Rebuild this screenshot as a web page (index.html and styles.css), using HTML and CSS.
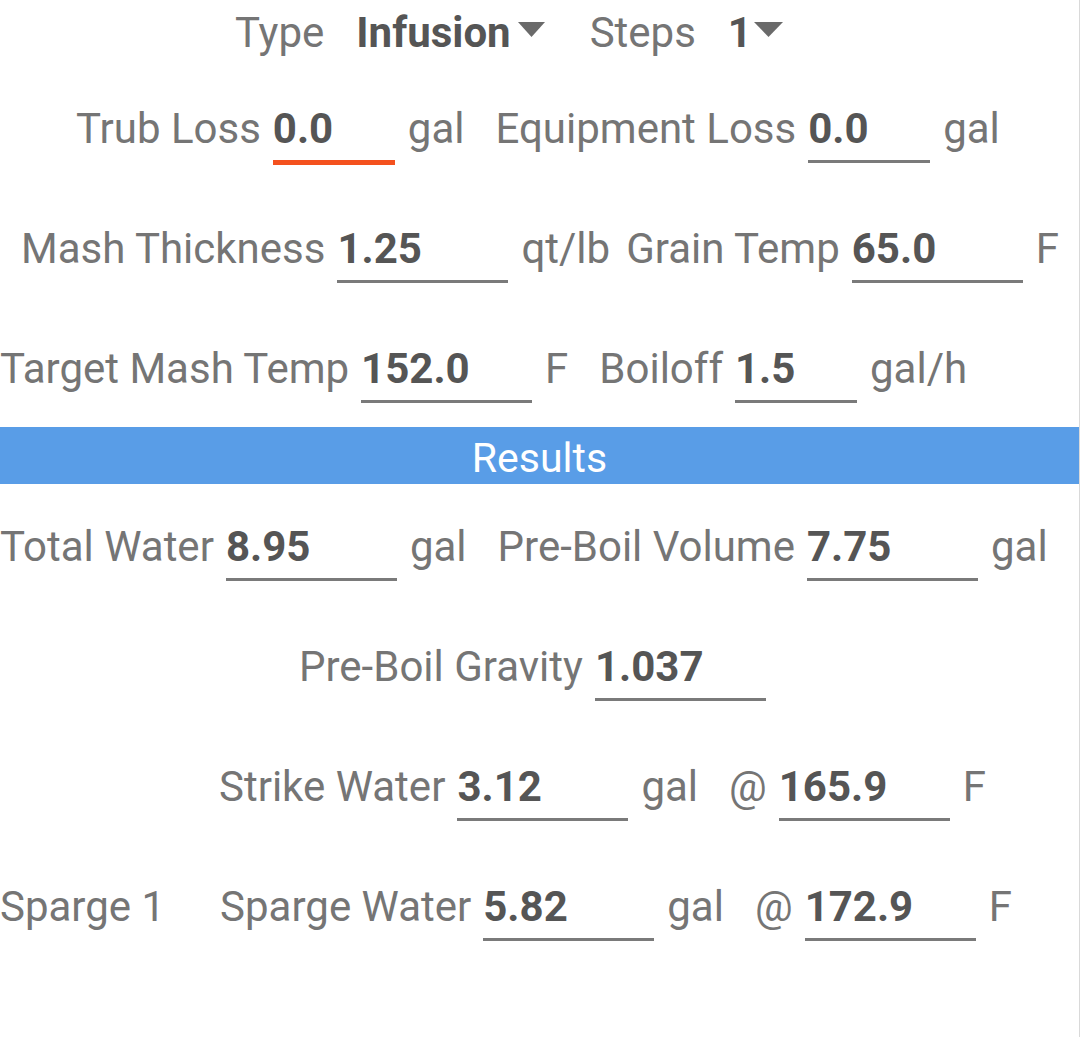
FILE: index.html
```html
<!DOCTYPE html>
<html>
<head>
<meta charset="utf-8">
<link rel="stylesheet" href="styles.css">
</head>
<body>
<div class="page">
  <div class="header">
    <span class="label">Type</span>
    <span class="spinner"><span class="value">Infusion</span><svg class="caret" width="27" height="15" viewBox="0 0 27 15"><polygon points="0,0 27,0 13.5,15" fill="#6a6a6a"/></svg></span>
    <span class="label steps">Steps</span>
    <span class="spinner num"><span class="value">1</span><svg class="caret" width="29" height="15" viewBox="0 0 29 15"><polygon points="0,0 29,0 14.5,15" fill="#6a6a6a"/></svg></span>
  </div>

  <div class="row r-trub">
    <span class="label">Trub Loss</span>
    <span class="field short focused">0.0</span>
    <span class="label unit">gal</span>
    <span class="label sep">Equipment Loss</span>
    <span class="field short">0.0</span>
    <span class="label unit">gal</span>
  </div>

  <div class="row r-mash">
    <span class="label">Mash Thickness</span>
    <span class="field">1.25</span>
    <span class="label unit">qt/lb</span>
    <span class="label sep-s">Grain Temp</span>
    <span class="field">65.0</span>
    <span class="label unit">F</span>
  </div>

  <div class="row r-target">
    <span class="label">Target Mash Temp</span>
    <span class="field">152.0</span>
    <span class="label unit">F</span>
    <span class="label sep">Boiloff</span>
    <span class="field short">1.5</span>
    <span class="label unit">gal/h</span>
  </div>

  <div class="results-bar">Results</div>

  <div class="row r-total">
    <span class="label">Total Water</span>
    <span class="field">8.95</span>
    <span class="label unit">gal</span>
    <span class="label sep">Pre-Boil Volume</span>
    <span class="field">7.75</span>
    <span class="label unit">gal</span>
  </div>

  <div class="row r-gravity">
    <span class="label">Pre-Boil Gravity</span>
    <span class="field">1.037</span>
  </div>

  <div class="row r-strike">
    <span class="label">Strike Water</span>
    <span class="field">3.12</span>
    <span class="label unit">gal</span>
    <span class="label sep">@</span>
    <span class="field">165.9</span>
    <span class="label unit">F</span>
  </div>

  <div class="row r-sparge">
    <span class="label">Sparge 1</span>
    <span class="label sep-l">Sparge Water</span>
    <span class="field">5.82</span>
    <span class="label unit">gal</span>
    <span class="label sep">@</span>
    <span class="field">172.9</span>
    <span class="label unit">F</span>
  </div>
</div>
</body>
</html>
```

FILE: styles.css
```css
html, body {
  margin: 0;
  padding: 0;
  background: #ffffff;
}

.page {
  width: 1079px;
  height: 1037px;
  border-right: 1px solid #d9d9d9;
  font-family: Roboto, "Noto Sans", sans-serif;
  font-size: 42px;
  line-height: 50px;
  color: #757575;
  overflow: hidden;
}

.header {
  display: flex;
  align-items: baseline;
  height: 96px;
  box-sizing: border-box;
  padding: 8px 0 0 235px;
}

.header .spinner {
  display: flex;
  align-items: flex-start;
  margin-left: 32px;
}

.header .steps {
  margin-left: 45px;
}

.caret {
  display: block;
  margin-top: 14px;
  margin-left: 7px;
}

.header .spinner.num .caret {
  margin-left: 2px;
}

.value {
  font-weight: bold;
  color: #555555;
}

.row {
  display: flex;
  align-items: baseline;
  gap: 12px;
  height: 120px;
  box-sizing: border-box;
  padding-top: 8px;
  white-space: nowrap;
}

.label {
  color: #757575;
}

.unit { margin-left: 1px; }
.sep { margin-left: 19px; }
.sep-s { margin-left: 4px; }
.sep-l { margin-left: 43px; }

.field {
  display: inline-block;
  width: 171px;
  padding-bottom: 6px;
  border-bottom: 3px solid #7a7a7a;
  font-weight: bold;
  color: #555555;
}

.field.short { width: 122px; }

.field.focused {
  border-bottom: 5px solid #f4511e;
}

.r-trub { padding-left: 76px; }
.r-mash { padding-left: 21px; }
.r-target { padding-left: 0; height: 91px; }
.r-total { padding-left: 0; margin-top: 30px; }
.r-gravity { padding-left: 299px; }
.r-strike { padding-left: 219px; }
.r-sparge { padding-left: 0; }

.results-bar {
  height: 57px;
  background: #599de7;
  color: #ffffff;
  text-align: center;
  font-size: 41px;
  line-height: 63px;
}
```
